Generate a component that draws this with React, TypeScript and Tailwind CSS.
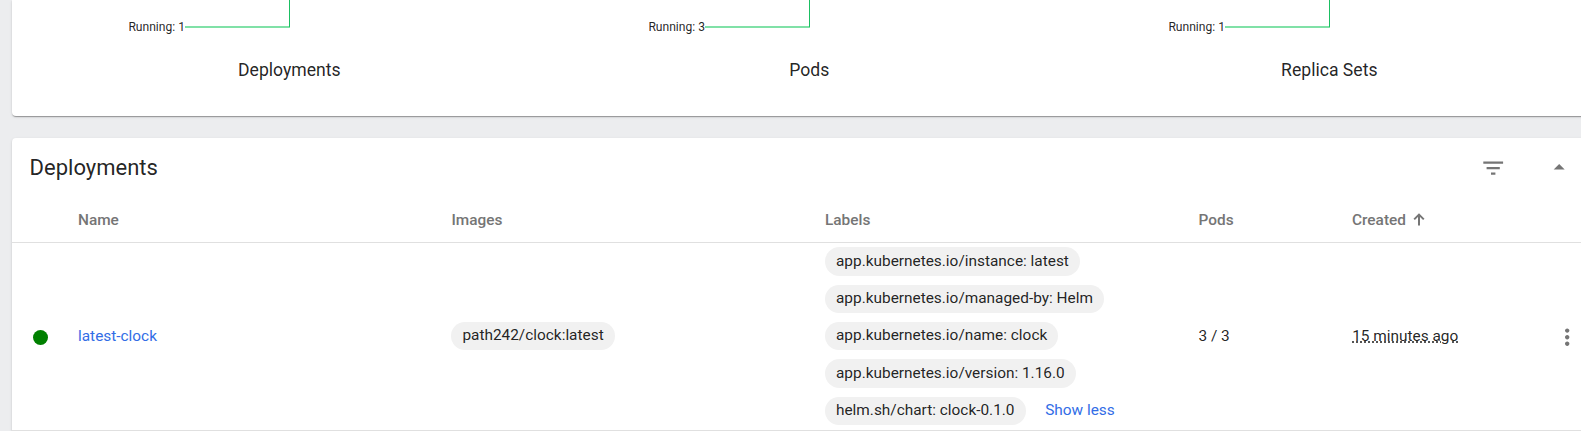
const charts = [
  { title: 'Deployments', running: 1 },
  { title: 'Pods', running: 3 },
  { title: 'Replica Sets', running: 1 },
];

const labels = [
  'app.kubernetes.io/instance: latest',
  'app.kubernetes.io/managed-by: Helm',
  'app.kubernetes.io/name: clock',
  'app.kubernetes.io/version: 1.16.0',
  'helm.sh/chart: clock-0.1.0',
];

const card =
  'w-[1580px] shrink-0 rounded-[4px] bg-white shadow-[0_2px_1px_-1px_rgba(0,0,0,0.2),0_1px_1px_0_rgba(0,0,0,0.14),0_1px_3px_0_rgba(0,0,0,0.12)]';

function Chip({ text }: { text: string }) {
  return (
    <span className="my-[4.5px] flex h-[28.4px] items-center rounded-full bg-[#f1f1f1] px-[11px] pb-[0.75px] leading-[23px] whitespace-pre">
      {text}
    </span>
  );
}

function Chart({ title, running }: { title: string; running: number }) {
  return (
    <div className="flex w-[520px] shrink-0 flex-col items-center">
      <svg width="520" height="58" className="block">
        <text x="155" y="31" textAnchor="end" fontSize="12.1" fill="rgba(0,0,0,0.87)">
          {`Running: ${running}`}
        </text>
        <rect x="155" y="26" width="105" height="2" fill="#80e1a7" />
        <rect x="259" y="0" width="1" height="27" fill="#1bbf62" />
      </svg>
      <div className="pr-[1.4px] text-[17.6px] leading-[24px]">{title}</div>
    </div>
  );
}

export default function App() {
  return (
    <div className="h-[431px] w-[1581px] overflow-hidden bg-[#ecedef] pl-3 font-['Roboto',sans-serif] text-[rgba(0,0,0,0.87)]">
      <section className={`${card} mb-[22px] flex h-[116px] rounded-t-none pl-[18px]`}>
        {charts.map((c) => (
          <Chart key={c.title} {...c} />
        ))}
      </section>

      <section className={`${card} h-[320px]`}>
        <header className="flex h-[59px] items-center pl-[17.6px]">
          <h2 className="w-[1450px] text-[22px] leading-[30px]">Deployments</h2>
          <svg viewBox="0 0 24 24" className="mt-[1px] size-[26.4px]" fill="#757575">
            <path d="M10 18h4v-2h-4v2zM3 6v2h18V6H3zm3 7h12v-2H6v2z" />
          </svg>
          <svg viewBox="0 0 24 24" className="ml-[40px] size-[26.4px]" fill="#757575">
            <path d="M7 14l5-5 5 5z" />
          </svg>
        </header>

        <div className="flex h-[46px] items-center border-b border-[#e0e0e0] pt-[2px] pl-[66px] text-[15.4px] leading-[23px] font-medium text-[#757575]">
          <div className="w-[373.5px]">Name</div>
          <div className="w-[373.5px]">Images</div>
          <div className="w-[373.5px]">Labels</div>
          <div className="w-[153.5px]">Pods</div>
          <div className="flex items-center gap-[7.5px]">
            Created
            <svg width="12" height="13" viewBox="0 0 12 13" fill="none" stroke="#757575" strokeWidth="2" className="-mt-[2px]">
              <path d="M6 12.5V2M1.2 6.4L6 1.6l4.8 4.8" />
            </svg>
          </div>
        </div>

        <div className="flex h-[188px] items-center border-b border-[#e0e0e0] text-[15.4px]">
          <div className="w-[66px] pt-[1px] pl-[21px]">
            <div className="size-[15px] rounded-full bg-[#008000]" />
          </div>
          <div className="w-[373.4px] text-[#326de6]">latest-clock</div>
          <div className="-mt-[0.6px] flex w-[373.6px]">
            <Chip text="path242/clock:latest" />
          </div>
          <div className="-mt-[0.6px] flex w-[373.5px] flex-col items-start">
            {labels.slice(0, 4).map((l) => (
              <Chip key={l} text={l} />
            ))}
            <div className="flex items-center">
              <Chip text={labels[4]} />
              <span className="ml-[19.6px] pb-[1px] leading-[23px] text-[#326de6]">Show less</span>
            </div>
          </div>
          <div className="w-[153.7px]">3 / 3</div>
          <div className="w-[202.3px]">
            <span className="underline decoration-dotted">15 minutes ago</span>
          </div>
          <svg viewBox="0 0 24 24" className="mt-[0.4px] size-[26.4px]" fill="#757575">
            <path d="M12 8c1.1 0 2-.9 2-2s-.9-2-2-2-2 .9-2 2 .9 2 2 2zm0 2c-1.1 0-2 .9-2 2s.9 2 2 2 2-.9 2-2-.9-2-2-2zm0 6c-1.1 0-2 .9-2 2s.9 2 2 2 2-.9 2-2-.9-2-2-2z" />
          </svg>
        </div>
      </section>
    </div>
  );
}
